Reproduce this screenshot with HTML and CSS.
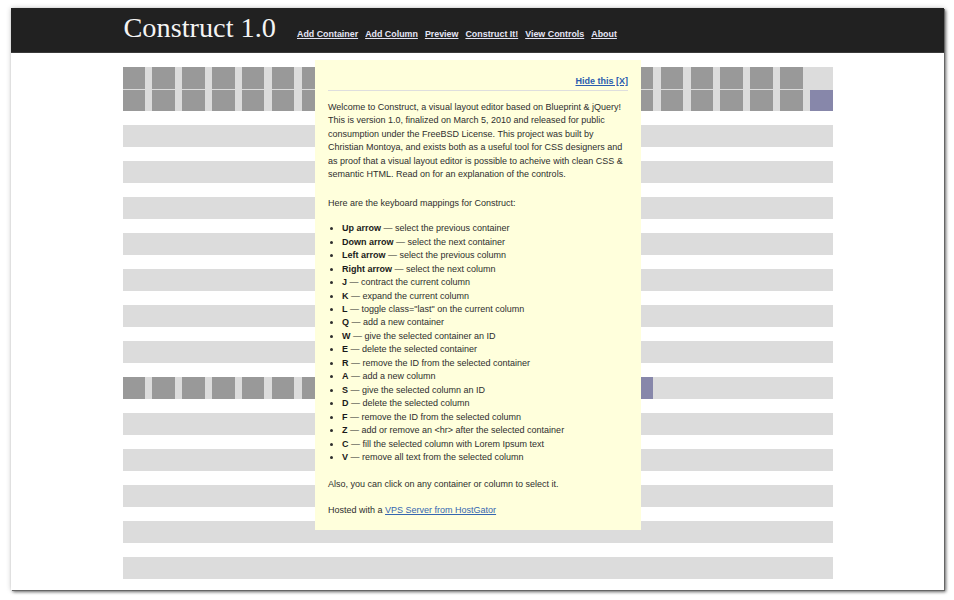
FILE: index.html
```html
<!DOCTYPE html>
<html>
<head>
<meta charset="utf-8">
<title>Construct 1.0</title>
<link rel="stylesheet" href="styles.css">
</head>
<body>
<div class="window">
  <header class="header">
    <div class="header-inner">
      <h1 class="title">Construct 1.0</h1>
      <nav class="nav">
        <a href="#">Add Container</a>
        <a href="#">Add Column</a>
        <a href="#">Preview</a>
        <a href="#">Construct It!</a>
        <a href="#">View Controls</a>
        <a href="#">About</a>
      </nav>
    </div>
  </header>

  <main class="rows">
    <div class="row tall">
      <div class="grid">
        <span class="col"></span><span class="col"></span><span class="col"></span><span class="col"></span><span class="col"></span><span class="col"></span><span class="col"></span><span class="col"></span><span class="col"></span><span class="col"></span><span class="col"></span><span class="col"></span><span class="col"></span><span class="col"></span><span class="col"></span><span class="col"></span><span class="col"></span><span class="col"></span><span class="col"></span><span class="col"></span><span class="col"></span><span class="col"></span><span class="col"></span><span></span>
      </div>
      <div class="grid">
        <span class="col"></span><span class="col"></span><span class="col"></span><span class="col"></span><span class="col"></span><span class="col"></span><span class="col"></span><span class="col"></span><span class="col"></span><span class="col"></span><span class="col"></span><span class="col"></span><span class="col"></span><span class="col"></span><span class="col"></span><span class="col"></span><span class="col"></span><span class="col"></span><span class="col"></span><span class="col"></span><span class="col"></span><span class="col"></span><span class="col"></span><span class="col sel"></span>
      </div>
    </div>
    <div class="row"></div>
    <div class="row"></div>
    <div class="row"></div>
    <div class="row"></div>
    <div class="row"></div>
    <div class="row"></div>
    <div class="row"></div>
    <div class="row grid">
      <span class="col"></span><span class="col"></span><span class="col"></span><span class="col"></span><span class="col"></span><span class="col"></span><span class="col"></span><span class="col"></span><span class="col"></span><span class="col"></span><span class="col"></span><span class="col"></span><span class="col"></span><span class="col"></span><span class="col"></span><span class="col"></span><span class="col"></span><span class="col sel"></span>
    </div>
    <div class="row"></div>
    <div class="row"></div>
    <div class="row"></div>
    <div class="row"></div>
    <div class="row"></div>
  </main>

  <div class="panel">
    <div class="hide"><a href="#">Hide this [X]</a></div>
    <hr class="rule">
    <p class="intro">Welcome to Construct, a visual layout editor based on Blueprint &amp; jQuery!<br>This is version 1.0, finalized on March 5, 2010 and released for public<br>consumption under the FreeBSD License. This project was built by<br>Christian Montoya, and exists both as a useful tool for CSS designers and<br>as proof that a visual layout editor is possible to acheive with clean CSS &amp;<br>semantic HTML. Read on for an explanation of the controls.</p>
    <p class="lead">Here are the keyboard mappings for Construct:</p>
    <ul class="keys">
      <li><b>Up arrow</b> — select the previous container</li>
      <li><b>Down arrow</b> — select the next container</li>
      <li><b>Left arrow</b> — select the previous column</li>
      <li><b>Right arrow</b> — select the next column</li>
      <li><b>J</b> — contract the current column</li>
      <li><b>K</b> — expand the current column</li>
      <li><b>L</b> — toggle class="last" on the current column</li>
      <li><b>Q</b> — add a new container</li>
      <li><b>W</b> — give the selected container an ID</li>
      <li><b>E</b> — delete the selected container</li>
      <li><b>R</b> — remove the ID from the selected container</li>
      <li><b>A</b> — add a new column</li>
      <li><b>S</b> — give the selected column an ID</li>
      <li><b>D</b> — delete the selected column</li>
      <li><b>F</b> — remove the ID from the selected column</li>
      <li><b>Z</b> — add or remove an &lt;hr&gt; after the selected container</li>
      <li><b>C</b> — fill the selected column with Lorem Ipsum text</li>
      <li><b>V</b> — remove all text from the selected column</li>
    </ul>
    <p class="lead">Also, you can click on any container or column to select it.</p>
    <p class="last">Hosted with a <a class="host" href="#">VPS Server from HostGator</a></p>
  </div>
</div>
</body>
</html>
```

FILE: styles.css
```css
* { box-sizing: border-box; }

html, body {
  margin: 0;
  padding: 0;
  background: #ffffff;
}

body {
  width: 954px;
  height: 600px;
  overflow: hidden;
  padding: 8px 0 0 11px;
  font-family: "Liberation Sans", Arial, sans-serif;
}

.window {
  position: relative;
  width: 933px;
  height: 582px;
  background: #ffffff;
  box-shadow: 1px 1px 0 #666, 2px 2px 3px rgba(0,0,0,0.55), 0 0 5px rgba(0,0,0,0.22);
  overflow: hidden;
}

.header {
  height: 45px;
  background: #212121;
  border-bottom: 1px solid #3a3a3a;
}

.header-inner {
  width: 710px;
  margin: 0 auto;
  padding-top: 4px;
  display: flex;
  align-items: baseline;
}

.title {
  margin: 0;
  font-family: "Liberation Serif", "Times New Roman", serif;
  font-weight: normal;
  font-size: 28.3px;
  line-height: 32px;
  color: #f4f4f4;
  padding-left: 1px;
}

.nav {
  margin-left: 21px;
  display: flex;
  gap: 7px;
}

.nav a {
  font-size: 8.9px;
  font-weight: bold;
  color: #e4e4f4;
  text-decoration: underline;
}

.rows {
  width: 710px;
  margin: 14px auto 0;
  display: flex;
  flex-direction: column;
  gap: 14px;
}

.row {
  height: 22px;
  background: #dcdcdc;
}

.row.tall {
  height: 44px;
  display: flex;
  flex-direction: column;
  gap: 1px;
}

.grid {
  display: grid;
  grid-template-columns: repeat(24, 1fr);
  column-gap: 7.5px;
  height: 21.5px;
}

.row.grid {
  height: 22px;
}

.col {
  display: block;
  background: #999999;
}

.col.sel {
  background: #8787aa;
}

.panel {
  position: absolute;
  top: 52px;
  left: 304px;
  width: 326px;
  background: #ffffdc;
  padding: 15px 13px 12px;
  font-size: 9px;
  line-height: 13.45px;
  color: #2e2e2e;
}

.hide {
  text-align: right;
  height: 13.4px;
}

.hide a {
  font-weight: bold;
  color: #2a5caf;
  text-decoration: underline;
}

.rule {
  border: none;
  border-top: 1px solid #dedede;
  height: 0;
  margin: 1.5px 0 10px;
}

.panel p {
  margin: 0 0 13.5px;
  white-space: nowrap;
}

.panel p.intro {
  margin-bottom: 15px;
}

.panel p.lead {
  margin-bottom: 12.2px;
}

.panel p.last {
  margin-bottom: 0;
}

.keys {
  margin: 0 0 14px;
  padding-left: 14px;
  list-style: disc;
}

.keys li {
  white-space: nowrap;
}

.keys b {
  color: #1a1a1a;
}

.host {
  color: #3566b0;
  text-decoration: underline;
}
```
